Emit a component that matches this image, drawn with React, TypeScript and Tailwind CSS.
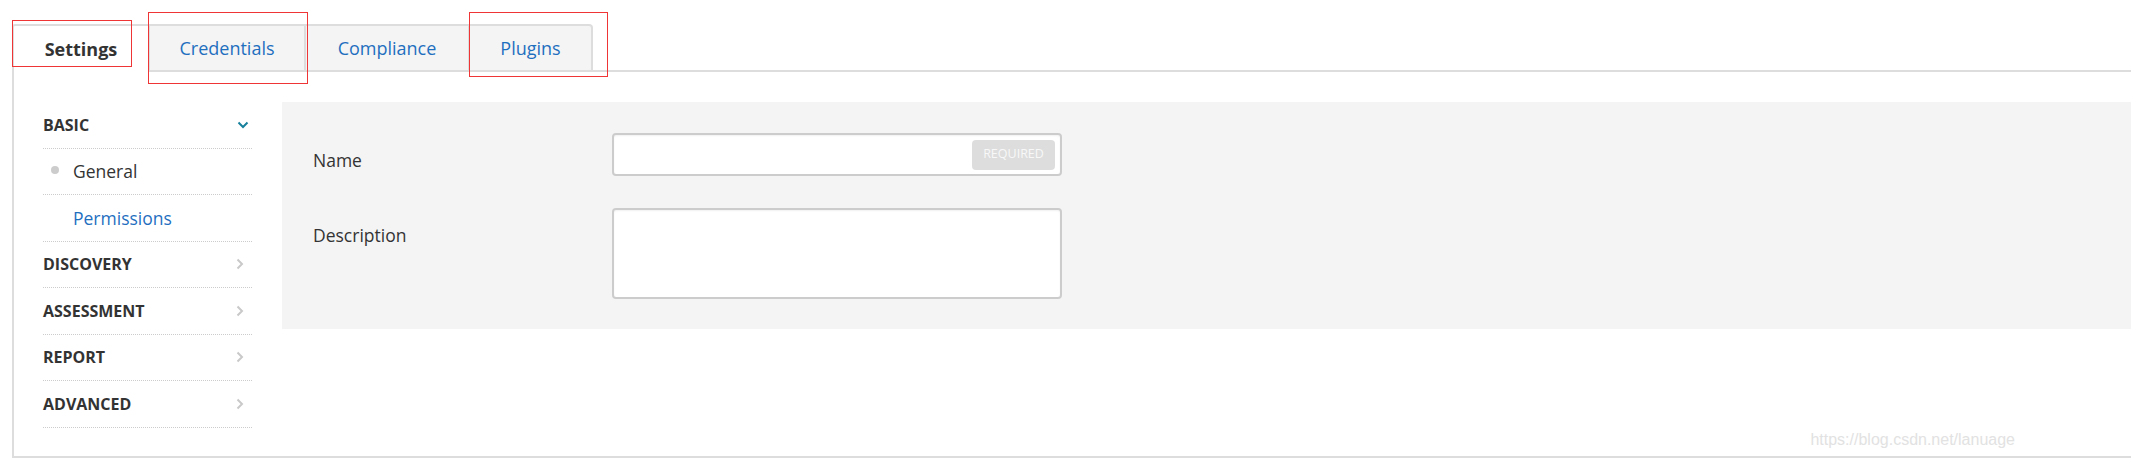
import React from "react";

function ChevronDown() {
  return (
    <svg width="12" height="8" viewBox="0 0 12 8" className="mr-[3px]">
      <polyline
        points="1.5,1.5 6,6 10.5,1.5"
        fill="none"
        stroke="#17809c"
        strokeWidth="2"
      />
    </svg>
  );
}

function ChevronRight() {
  return (
    <svg width="8" height="12" viewBox="0 0 8 12" className="mr-[8px]">
      <polyline
        points="1.5,1.5 6,6 1.5,10.5"
        fill="none"
        stroke="#c9c9c9"
        strokeWidth="2"
      />
    </svg>
  );
}

function Section({ title, open }: { title: string; open?: boolean }) {
  return (
    <div className="flex h-[46.5px] items-center justify-between border-b border-dotted border-[#cccccc]">
      <span className="text-[16px] font-bold text-[#333]">{title}</span>
      {open ? <ChevronDown /> : <ChevronRight />}
    </div>
  );
}

export default function App() {
  return (
    <div className="relative h-[458px] w-full overflow-hidden bg-white font-['Open_Sans',sans-serif]">
      {/* tabs */}
      <div className="flex pl-[12px] pt-[24px]">
        <div className="flex h-[48px] w-[136px] items-center justify-center rounded-tl-[3px] border-l-2 border-t-2 border-[#ddd] bg-white">
          <span className="text-[18px] font-bold text-[#333]">Settings</span>
        </div>
        <div className="flex h-[48px] w-[156px] items-center justify-center border-2 border-r-0 border-[#ddd] bg-[#f4f4f4]">
          <span className="text-[18px] text-[#1f6fbf]">Credentials</span>
        </div>
        <div className="flex h-[48px] w-[164px] items-center justify-center border-2 border-r-0 border-[#ddd] bg-[#f4f4f4]">
          <span className="text-[18px] text-[#1f6fbf]">Compliance</span>
        </div>
        <div className="flex h-[48px] w-[125px] items-center justify-center rounded-tr-[4px] border-2 border-[#ddd] bg-[#f4f4f4]">
          <span className="text-[18px] text-[#1f6fbf]">Plugins</span>
        </div>
        <div className="flex-1 border-b-2 border-[#ddd]" />
      </div>

      {/* content */}
      <div className="ml-[12px] flex h-[386px] border-b-2 border-l-2 border-[#ddd] pl-[29px] pt-[30px]">
        <div className="w-[209px] shrink-0">
          <Section title="BASIC" open />
          <div className="flex h-[46.5px] items-center border-b border-dotted border-[#cccccc] pl-[8px]">
            <span className="mb-[3px] h-[8px] w-[8px] rounded-full bg-[#ccc]" />
            <span className="ml-[14px] text-[17.5px] text-[#333]">General</span>
          </div>
          <div className="flex h-[46.5px] items-center border-b border-dotted border-[#cccccc] pl-[30px]">
            <span className="text-[17.5px] text-[#1f6fbf]">Permissions</span>
          </div>
          <Section title="DISCOVERY" />
          <Section title="ASSESSMENT" />
          <Section title="REPORT" />
          <Section title="ADVANCED" />
        </div>

        <div className="ml-[30px] h-[227px] flex-1 bg-[#f4f4f4] pl-[31px] pt-[31px]">
          <div className="flex">
            <label className="w-[299px] pt-[15px] text-[17.5px] leading-[24px] text-[#333]">
              Name
            </label>
            <div className="flex h-[43px] w-[450px] items-center rounded-[4px] border-2 border-[#ccc] bg-white pr-[5px] shadow-[inset_0_1px_2px_rgba(0,0,0,0.06)]">
              <input className="h-full flex-1 bg-transparent outline-none" readOnly />
              <span className="flex h-[30px] w-[83px] items-center justify-center rounded-[4px] bg-[#ddd] text-[12.5px] text-[#f8f8f8]">
                REQUIRED
              </span>
            </div>
          </div>
          <div className="mt-[32px] flex">
            <label className="w-[299px] pt-[15px] text-[17.5px] leading-[24px] text-[#333]">
              Description
            </label>
            <textarea
              className="h-[91px] w-[450px] resize-none rounded-[4px] border-2 border-[#ccc] bg-white shadow-[inset_0_1px_2px_rgba(0,0,0,0.06)] outline-none"
              readOnly
            />
          </div>
        </div>
      </div>

      {/* red annotation boxes drawn over the screenshot */}
      <div className="pointer-events-none absolute left-[12px] top-[20px] h-[47px] w-[120px] border border-[#ef3535]" />
      <div className="pointer-events-none absolute left-[148px] top-[12px] h-[72px] w-[160px] border border-[#ef3535]" />
      <div className="pointer-events-none absolute left-[469px] top-[12px] h-[65px] w-[139px] border border-[#ef3535]" />

      <span className="absolute bottom-[9px] right-[116px] font-['Liberation_Sans',sans-serif] text-[16px] leading-[18px] text-[#e2e2e2]">
        https://blog.csdn.net/lanuage
      </span>
    </div>
  );
}
